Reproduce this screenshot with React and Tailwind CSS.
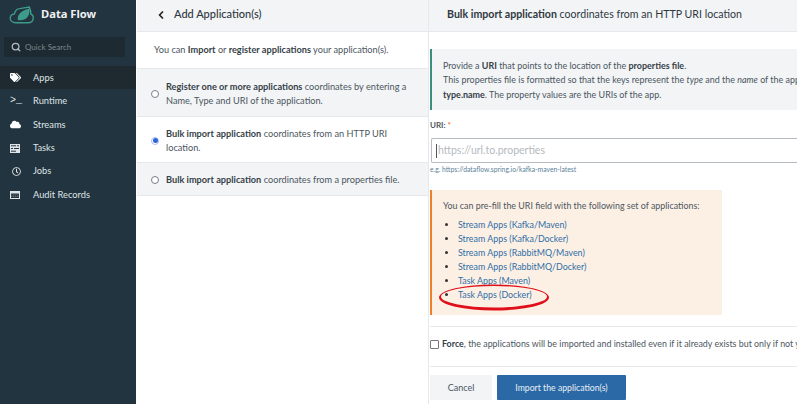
import React from 'react';
import { Search, ChevronLeft } from 'lucide-react';
import { FaTags, FaCloud, FaRegClock } from 'react-icons/fa';

const TasksIcon = () => (
  <svg width="10" height="9" viewBox="0 0 10 9" className="mt-px">
    <rect width="10" height="9" fill="#dfe4e7" />
    <path d="M1 1.8H6M7 1.8H9M4 4.5H9M1 4.5H3M1 7.2H6" stroke="#22343f" strokeWidth="1" />
  </svg>
);

const AuditIcon = () => (
  <svg width="10" height="8" viewBox="0 0 10 8" className="mt-px">
    <rect width="10" height="8" fill="#dfe4e7" />
    <rect x="1" y="2.5" width="8" height="4.5" fill="#22343f" />
    <path d="M1 4H9M1 5.5H9" stroke="#8c979e" strokeWidth="0.6" strokeDasharray="1.4 0.6" />
  </svg>
);

const NavIcon = ({ name }) => {
  if (name === 'Apps') return <FaTags className="w-[11px] h-[11px] text-white" />;
  if (name === 'Runtime') return <span className="text-[10px] leading-none font-['Liberation_Mono',monospace] text-[#dfe4e7]">&gt;_</span>;
  if (name === 'Streams') return <FaCloud className="w-[11px] h-[11px] text-white" />;
  if (name === 'Tasks') return <TasksIcon />;
  if (name === 'Jobs') return <FaRegClock className="w-[9px] h-[9px] ml-[2px] text-[#e6e9eb]" />;
  return <AuditIcon />;
};

const Logo = () => (
  <svg width="26" height="22" viewBox="0 0 28 24" fill="none" className="shrink-0">
    <path d="M7 21.5 C3.5 21.5 1.2 19.2 1.2 16.6 C1.2 14 3.3 12.2 5.6 12 C6.4 8.2 9.6 5.8 13 5.8 L22 4.5 C23 7 24 9.5 23.6 12 C25.8 13 26.6 15 26.2 17 C25.8 19.6 23.6 21.5 21 21.5 Z" stroke="#3d9b8a" strokeWidth="1.5" />
    <path d="M9.5 18.5 C8.6 13 12.5 8.5 22 6 C23 11.5 20.5 18.5 13 18.8 C11.5 18.9 10.4 18.8 9.5 18.5 Z" fill="#3d9b8a" />
  </svg>
);

const Sidebar = () => (
  <aside className="w-[136px] shrink-0 bg-[#22343f] text-[#dfe4e7]">
    <div className="h-[37px] pl-[9px] pb-[9px] flex items-center gap-[6px]">
      <Logo />
      <span className="text-[11.2px] font-bold text-[#eef1f2] font-['Noto_Sans',sans-serif]">Data Flow</span>
    </div>
    <div className="h-[20px] ml-[4px] w-[121px] bg-[#1e2a31] flex items-center pl-[7px] gap-[4px]">
      <Search className="w-[10px] h-[10px] text-[#b4bcc1]" strokeWidth={3} />
      <span className="text-[8px] text-[#7d8990]">Quick Search</span>
    </div>
    <nav className="mt-[9px]">
      {['Apps', 'Runtime', 'Streams', 'Tasks', 'Jobs', 'Audit Records'].map((name) => (
        <div
          key={name}
          className={`h-[23.4px] flex items-center pl-[10px] ${name === 'Apps' ? 'bg-[#1e2a30]' : ''}`}
        >
          <span className="w-[23px] shrink-0 flex"><NavIcon name={name} /></span>
          <span className="text-[9.3px]">{name}</span>
        </div>
      ))}
    </nav>
  </aside>
);

const Radio = ({ checked }) => (
  <span className={`w-[8px] h-[8px] shrink-0 rounded-full border bg-white flex items-center justify-center ${checked ? 'border-[#a9c1f2]' : 'border-[#77808a]'}`}>
    {checked && <span className="w-[5px] h-[5px] rounded-full bg-[#2f63e0]" />}
  </span>
);

const Option = ({ checked, gray, bold, children, className = '' }) => (
  <div className={`flex items-center pl-[14px] pr-[8px] pt-[2px] border-b border-[#e6e9ec] ${gray ? 'bg-[#f2f4f6]' : 'bg-white'} ${className}`}>
    <Radio checked={checked} />
    <p className="ml-[7px] text-[9.2px] leading-[14px] text-[#4c5660]">
      <b className="text-[#363f47] font-bold">{bold}</b> {children}
    </p>
  </div>
);

const Middle = () => (
  <section className="w-[292px] shrink-0 ml-[1px] border-r border-[#e6e9ec]">
    <div className="h-[32px] pb-[2px] bg-[#f2f4f6] border-b border-[#e6e9ec] flex items-center pl-[18px]">
      <ChevronLeft className="w-[12px] h-[12px] text-[#222]" strokeWidth={3.5} />
      <h2 className="ml-[7px] text-[11px] font-medium text-[#30383f]">Add Application(s)</h2>
    </div>
    <p className="h-[37px] flex items-center pl-[17px] text-[9.2px] text-[#4c5660] border-b border-[#e6e9ec]">
      <span>You can <b className="text-[#363f47]">Import</b> or <b className="text-[#363f47]">register applications</b> your application(s).</span>
    </p>
    <Option gray bold="Register one or more applications" className="h-[48px]">
      coordinates by entering a Name, Type and URI of the application.
    </Option>
    <Option checked bold="Bulk import application" className="h-[46px]">
      coordinates from an HTTP URI location.
    </Option>
    <Option gray bold="Bulk import application" className="h-[33px]">
      coordinates from a properties file.
    </Option>
  </section>
);

const links = [
  'Stream Apps (Kafka/Maven)',
  'Stream Apps (Kafka/Docker)',
  'Stream Apps (RabbitMQ/Maven)',
  'Stream Apps (RabbitMQ/Docker)',
  'Task Apps (Maven)',
  'Task Apps (Docker)',
];

const Right = () => (
  <section className="flex-1 min-w-0 mr-[3px] relative overflow-hidden">
    <div className="h-[32px] pb-[2px] bg-[#f2f4f6] border-b border-[#e6e9ec] flex items-center pl-[18px]">
      <h2 className="text-[10.6px] text-[#30383f]"><b className="font-bold">Bulk import application</b> coordinates from an HTTP URI location</h2>
    </div>
    <div className="ml-[1px] mt-[17px] h-[61px] pt-[2px] bg-[#f2f4f6] border-l-2 border-[#3e8e80] pl-[11px] flex flex-col justify-center text-[8.95px] leading-[14.5px] text-[#4c5660] whitespace-nowrap">
      <p>Provide a <b className="text-[#363f47]">URI</b> that points to the location of the <b className="text-[#363f47]">properties file</b>.</p>
      <p>This properties file is formatted so that the keys represent the <i>type</i> and the <i>name</i> of the application, in the format</p>
      <p><b className="text-[#363f47]">type.name</b>. The property values are the URIs of the app.</p>
    </div>
    <label className="block ml-[1px] mt-[9px] h-[12px] text-[8px] leading-[12px] font-bold text-[#4c5660]">URI: <span className="text-[#e8792b]">*</span></label>
    <div className="ml-[2px] mt-[7px] h-[25px] border border-[#b7bdc3] border-r-0 rounded-l-[2px] bg-white flex items-center pl-[4px] text-[10.5px] text-[#b3bac0]">
      <span className="w-px h-[14px] bg-[#555] mr-px" />https://url.to.properties
    </div>
    <p className="ml-[1px] mt-px h-[10px] text-[6.8px] leading-[10px] text-[#5d7f99]">e.g. https://dataflow.spring.io/kafka-maven-latest</p>
    <div className="ml-[1px] mt-[16px] w-[292px] h-[125px] bg-[#fcf0e5] border-l-2 border-[#ee7f2d] pl-[11px] pt-[10px]">
      <p className="text-[8.9px] leading-[12px] text-[#4c5660]">You can pre-fill the URI field with the following set of applications:</p>
      <ul className="mt-[6px] ml-[15px] list-disc text-[8.9px] leading-[14px] text-[#2f6ea5] marker:text-[#333]">
        {links.map((l) => <li key={l}>{l}</li>)}
      </ul>
    </div>
    <div className="ml-[1px] mt-[11px] border-t border-[#e6e9ec] h-[41px] border-b pb-[5px] flex items-center whitespace-nowrap">
      <span className="w-[9px] h-[9px] shrink-0 rounded-[1px] border border-[#777] bg-white" />
      <p className="ml-[3px] text-[8.9px] text-[#4c5660]"><b className="text-[#363f47]">Force</b>, the applications will be imported and installed even if it already exists but only if not yet deployed.</p>
    </div>
    <div className="ml-[1px] mt-[8px] flex gap-[5px]">
      <button className="w-[62px] h-[25px] bg-[#f2f4f6] text-[9px] text-[#4c5660]">Cancel</button>
      <button className="w-[129px] h-[25px] bg-[#2a69a6] text-[8.7px] text-[#e8eff5] rounded-[1px]">Import the application(s)</button>
    </div>
    <svg width="112" height="30" viewBox="0 0 112 30" className="absolute left-[9px] top-[282px]">
      <path
        fillRule="evenodd"
        fill="#e0101a"
        d="M1 15.5 a55 13 0 1 0 110 0 a55 13 0 1 0 -110 0 Z M3 14.7 a53 10.8 0 1 0 106 0 a53 10.8 0 1 0 -106 0 Z"
      />
    </svg>
  </section>
);

export default function App() {
  return (
    <div className="w-[800px] h-[404px] flex overflow-hidden bg-white font-['Lato',sans-serif]">
      <Sidebar />
      <Middle />
      <Right />
    </div>
  );
}
